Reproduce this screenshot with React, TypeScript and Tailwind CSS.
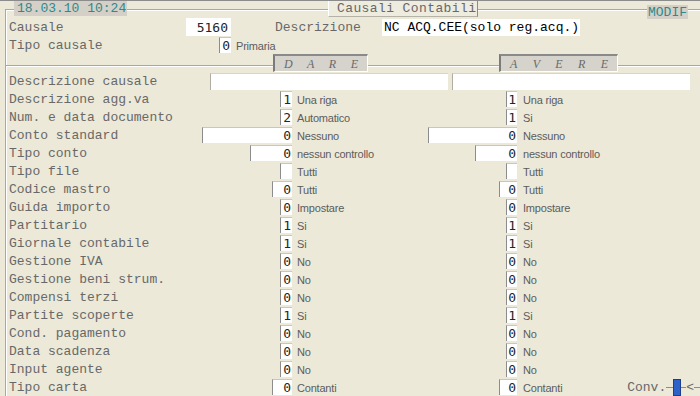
const mono = "font-['Liberation_Mono',monospace]"
const num = "font-['DejaVu_Sans_Mono',monospace]"
const sans = "font-['Liberation_Sans',Arial,sans-serif]"

interface Cell {
  v: string
  t: string
  w: string
}

interface Row {
  label: string
  dare: Cell
  avere: Cell
}

const D1 = 'w-[12px]'
const A1 = 'w-[11px]'

const rows: Row[] = [
  { label: 'Descrizione agg.va', dare: { v: '1', t: 'Una riga', w: D1 }, avere: { v: '1', t: 'Una riga', w: A1 } },
  { label: 'Num. e data documento', dare: { v: '2', t: 'Automatico', w: D1 }, avere: { v: '1', t: 'Si', w: A1 } },
  { label: 'Conto standard', dare: { v: '0', t: 'Nessuno', w: 'w-[90px]' }, avere: { v: '0', t: 'Nessuno', w: 'w-[89px]' } },
  { label: 'Tipo conto', dare: { v: '0', t: 'nessun controllo', w: 'w-[42px]' }, avere: { v: '0', t: 'nessun controllo', w: 'w-[42px]' } },
  { label: 'Tipo file', dare: { v: '', t: 'Tutti', w: D1 }, avere: { v: '', t: 'Tutti', w: A1 } },
  { label: 'Codice mastro', dare: { v: '0', t: 'Tutti', w: 'w-[20px]' }, avere: { v: '0', t: 'Tutti', w: 'w-[18px]' } },
  { label: 'Guida importo', dare: { v: '0', t: 'Impostare', w: D1 }, avere: { v: '0', t: 'Impostare', w: A1 } },
  { label: 'Partitario', dare: { v: '1', t: 'Si', w: D1 }, avere: { v: '1', t: 'Si', w: A1 } },
  { label: 'Giornale contabile', dare: { v: '1', t: 'Si', w: D1 }, avere: { v: '1', t: 'Si', w: A1 } },
  { label: 'Gestione IVA', dare: { v: '0', t: 'No', w: D1 }, avere: { v: '0', t: 'No', w: A1 } },
  { label: 'Gestione beni strum.', dare: { v: '0', t: 'No', w: D1 }, avere: { v: '0', t: 'No', w: A1 } },
  { label: 'Compensi terzi', dare: { v: '0', t: 'No', w: D1 }, avere: { v: '0', t: 'No', w: A1 } },
  { label: 'Partite scoperte', dare: { v: '1', t: 'Si', w: D1 }, avere: { v: '1', t: 'Si', w: A1 } },
  { label: 'Cond. pagamento', dare: { v: '0', t: 'No', w: D1 }, avere: { v: '0', t: 'No', w: A1 } },
  { label: 'Data scadenza', dare: { v: '0', t: 'No', w: D1 }, avere: { v: '0', t: 'No', w: A1 } },
  { label: 'Input agente', dare: { v: '0', t: 'No', w: D1 }, avere: { v: '0', t: 'No', w: A1 } },
  { label: 'Tipo carta', dare: { v: '0', t: 'Contanti', w: 'w-[20px]' }, avere: { v: '0', t: 'Contanti', w: 'w-[18px]' } },
]

function Box({ v, w }: { v: string; w: string }) {
  return (
    <div
      className={`${w} ${num} h-[16px] bg-white border-l border-t border-l-[#8c8c8c] border-t-[#c9c7bd] text-right pr-[1px] text-[13px] leading-[16px] text-[#262626]`}
    >
      {v}
    </div>
  )
}

function Label({ children }: { children: React.ReactNode }) {
  return (
    <span className={`${mono} text-[13px] leading-[18px] pt-[2px] text-[#686868] whitespace-pre`}>{children}</span>
  )
}

function Small({ children }: { children: React.ReactNode }) {
  return (
    <span className={`${sans} text-[11px] leading-[18px] pt-[1px] tracking-[-0.2px] text-[#5c5c5c] whitespace-pre`}>
      {children}
    </span>
  )
}

function Line({ className }: { className: string }) {
  return <div className={`${className} h-px bg-[#aca899] shadow-[0_1px_0_#ffffff]`} />
}

function Header({ letters, w }: { letters: string[]; w: string }) {
  return (
    <div
      className={`${w} h-[18px] flex items-center justify-between px-[9px] bg-[#d6d3cc] border-l-2 border-t-2 border-l-[#7b7b7b] border-t-[#8a8a8a] border-r border-b border-r-white border-b-white`}
    >
      {letters.map((l, i) => (
        <span key={i} className="font-['Liberation_Serif',serif] italic text-[12px] text-[#6a6a6a]">
          {l}
        </span>
      ))}
    </div>
  )
}

export default function App() {
  return (
    <div className="w-[700px] h-[396px] overflow-hidden bg-[#ece9d8] border-t border-t-[#8c8c8c]">
      <div className="mt-[8px] ml-[5px] h-[387px] border-t border-l border-[#aca899] shadow-[inset_1px_1px_0_#ffffff]">
        {/* titolo */}
        <div className="-mt-[10px] h-[18px] flex items-start">
          <div
            className={`${mono} ml-[8px] w-[113px] h-[16px] bg-[#d4d0c8] text-[13px] leading-[17px] pl-[3px] text-[#2b8b8b] whitespace-nowrap`}
          >
            18.03.10 10:24
          </div>
          <div
            className={`${mono} ml-[201px] w-[150px] h-[17px] bg-[#eeebdf] border-l border-l-white border-r border-b border-r-[#8c8c8c] border-b-[#b5b2a6] text-[13px] tracking-[0.4px] leading-[17px] pl-[8px] text-[#686868] whitespace-nowrap`}
          >
            Causali Contabili
          </div>
          <div
            className={`${mono} mt-[5px] ml-[169px] w-[41px] h-[14px] bg-[#d4d0c8] text-[13px] leading-[15px] pl-[1px] text-[#2b8b8b]`}
          >
            MODIF
          </div>
        </div>

        {/* causale */}
        <div className="h-[18px] flex items-center">
          <div className="w-[225px] pl-[3px] flex items-center justify-between">
            <Label>Causale</Label>
            <div className={`${num} w-[45px] h-[18px] bg-white text-right pr-[3px] text-[13px] leading-[19px] text-[#262626]`}>
              5160
            </div>
          </div>
          <div className="ml-[44px] w-[107px] flex">
            <Label>Descrizione</Label>
          </div>
          <div className={`${mono} w-[198px] h-[17px] bg-white pl-[2px] text-[13px] leading-[18px] text-black whitespace-pre`}>
            NC ACQ.CEE(solo reg.acq.)
          </div>
        </div>

        <div className="h-[18px] flex items-center">
          <div className="w-[225px] pl-[3px] flex items-center justify-between">
            <Label>Tipo causale</Label>
            <Box v="0" w="w-[12px]" />
          </div>
          <div className="pl-[5px] flex">
            <Small>Primaria</Small>
          </div>
        </div>

        {/* DARE / AVERE */}
        <div className="h-[18px] flex items-start">
          <Line className="mt-[11px] w-[267px]" />
          <Header letters={['D', 'A', 'R', 'E']} w="w-[95px]" />
          <Line className="mt-[11px] w-[131px]" />
          <Header letters={['A', 'V', 'E', 'R', 'E']} w="w-[119px]" />
          <Line className="mt-[11px] flex-1" />
        </div>

        <div className="h-[18px] flex items-center">
          <div className="w-[204px] pl-[3px] flex">
            <Label>Descrizione causale</Label>
          </div>
          <div className="w-[238px] h-[17px] bg-white border-l border-t border-l-[#b0aea4] border-t-[#d6d4ca]" />
          <div className="ml-[4px] w-[238px] h-[17px] bg-white border-l border-t border-l-[#b0aea4] border-t-[#d6d4ca]" />
        </div>

        {rows.map((r) => (
          <div key={r.label} className="h-[18px] flex items-center">
            <div className="w-[286px] pl-[3px] flex items-center justify-between">
              <Label>{r.label}</Label>
              <Box v={r.dare.v} w={r.dare.w} />
            </div>
            <div className="w-[225px] pl-[5px] flex items-center justify-between">
              <Small>{r.dare.t}</Small>
              <Box v={r.avere.v} w={r.avere.w} />
            </div>
            <div className="flex-1 pl-[6px] flex items-center justify-between">
              <Small>{r.avere.t}</Small>
              {r.label === 'Tipo carta' && (
                <div className="flex items-center">
                  <Label>Conv.</Label>
                  <div className="w-[7px] h-px bg-[#8c8c8c]" />
                  <div className="w-[8px] h-[17px] bg-[#2f62c8] border border-[#1d3f8a]" />
                  <div className="w-[5px] h-px bg-[#8c8c8c]" />
                  <Label>{'<'}</Label>
                  <div className="w-[6px] h-px bg-[#8c8c8c]" />
                </div>
              )}
            </div>
          </div>
        ))}
      </div>
    </div>
  )
}
